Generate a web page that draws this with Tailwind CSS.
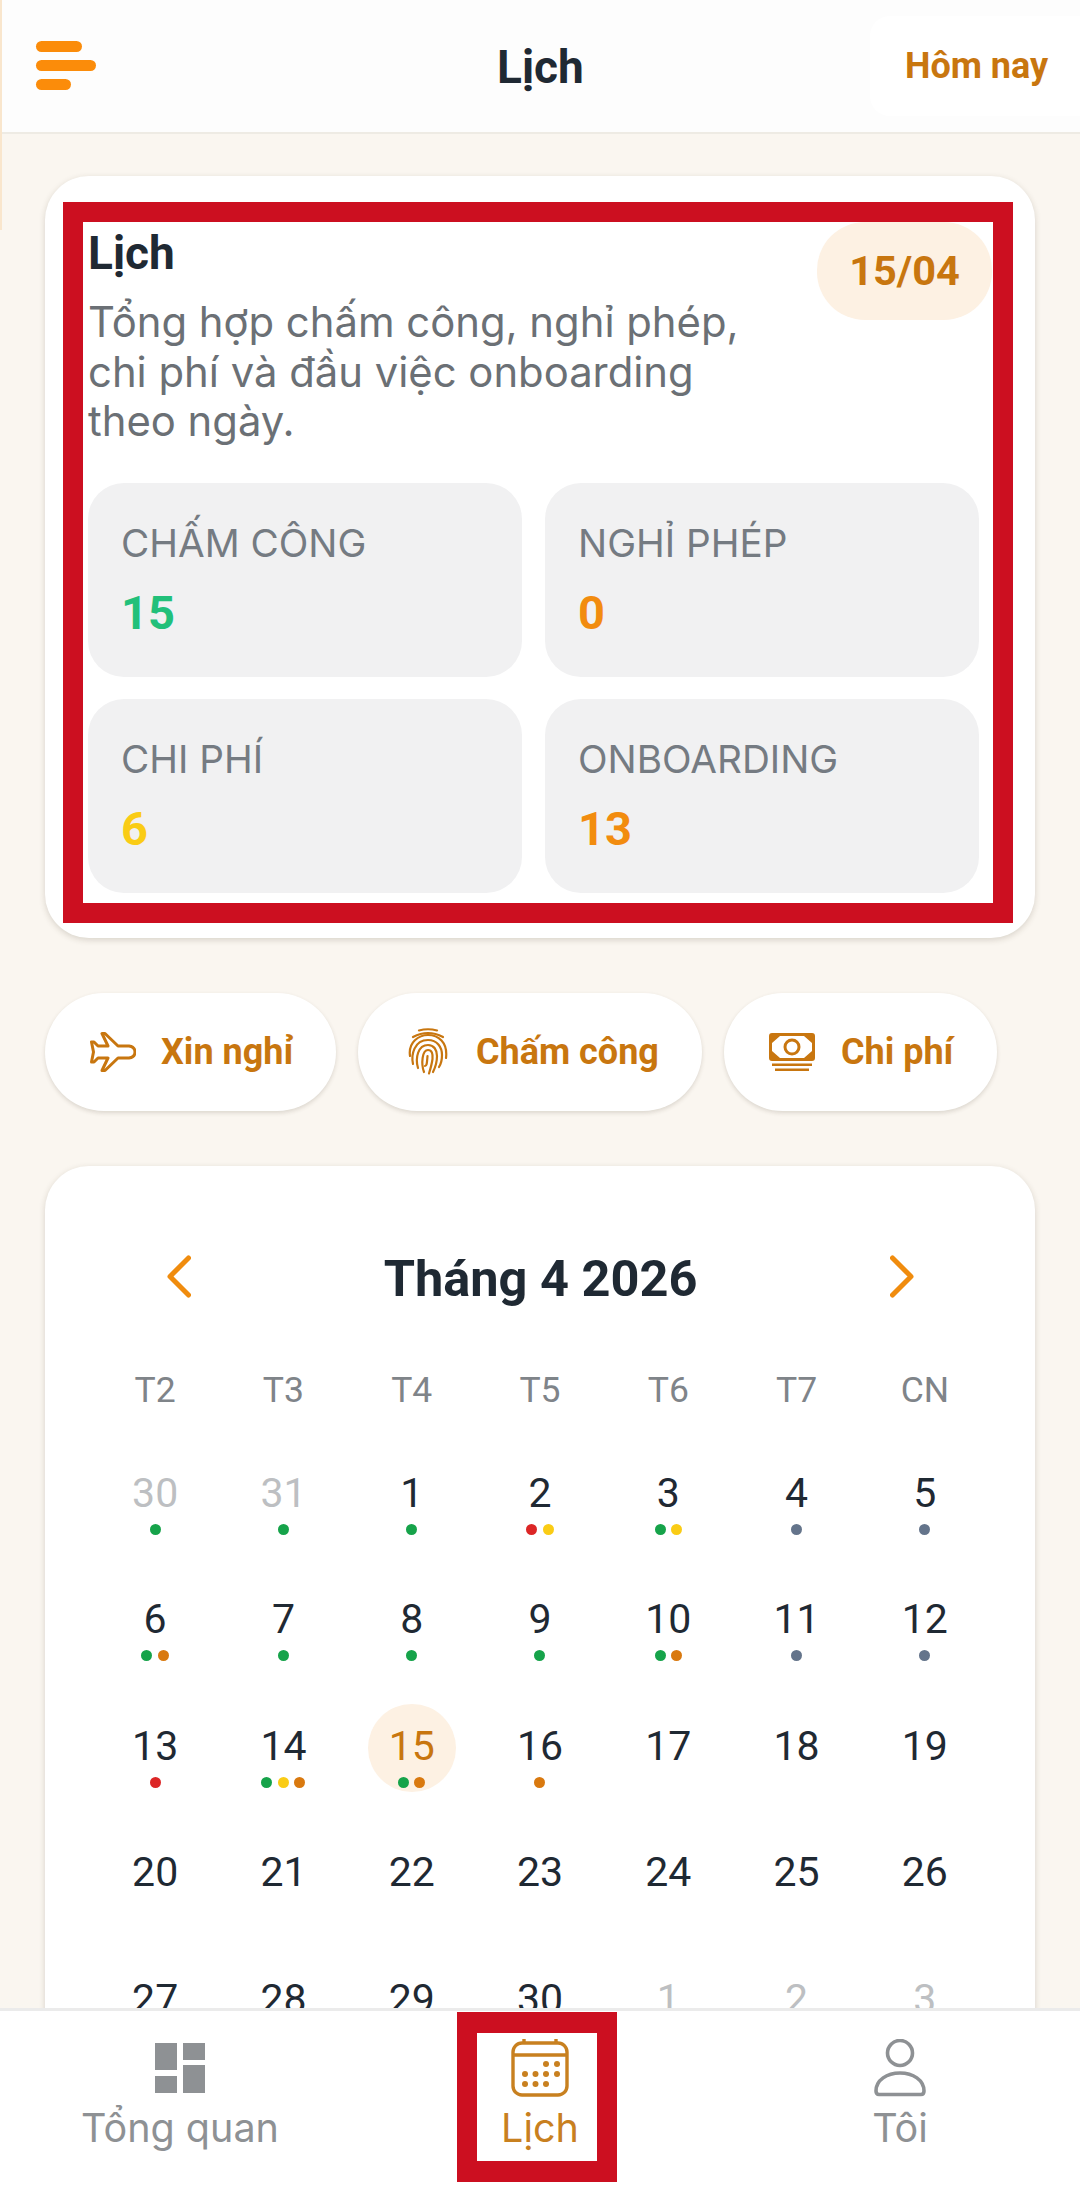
<!DOCTYPE html>
<html lang="vi">
  <head>
    <meta charset="UTF-8" />
    <meta name="viewport" content="width=device-width, initial-scale=1.0" />
    <title>Lịch</title>
    <script src="https://cdn.jsdelivr.net/npm/@tailwindcss/browser@4"></script>
  </head>
  <body class="bg-[#faf6f0] font-[Roboto,sans-serif]">
    <div class="relative flex flex-col w-[1080px] h-[2200px] overflow-hidden">
      <!-- thin strip on the left edge -->
      <div class="absolute z-10 left-0 top-0 w-[2px] h-[230px] bg-[#f9e6cd]"></div>

      <header class="flex items-center justify-between h-[134px] shrink-0 bg-[#fdfdfd] border-b-2 border-[#eeebe4] relative">
        <div class="flex flex-col gap-[8px] ml-[36px] -mt-[2px]">
          <div class="w-[46px] h-[11px] rounded-full bg-[#fb8c0a]"></div>
          <div class="w-[60px] h-[11px] rounded-full bg-[#fb8c0a]"></div>
          <div class="w-[35px] h-[11px] rounded-full bg-[#fb8c0a]"></div>
        </div>
        <h1 class="absolute left-[497px] top-[37px] text-[46px] leading-[60px] font-bold text-[#1f2933]">Lịch</h1>
        <button class="w-[210px] h-[100px] bg-white rounded-tl-[20px] rounded-bl-[20px] text-[36px] font-bold text-[#c8760f] text-left pl-[35px]">Hôm nay</button>
      </header>

      <main class="flex-1 min-h-0 overflow-hidden px-[45px] pt-[42px]">
        <!-- summary card -->
        <section class="bg-white rounded-[44px] shadow-[0_2px_6px_rgba(60,50,30,0.18)] pl-[18px] pr-[22px] pt-[26px] pb-[15px]">
          <div class="border-x-[20px] border-y-[20px] border-[#cc0f20]">
            <div class="flex justify-between pr-[1px]">
              <div class="pl-[5px]">
                <h2 class="text-[46px] leading-[60px] mt-[1px] font-bold text-[#1f2933]">Lịch</h2>
                <p class="w-[720px] text-[41.8px] leading-[49.5px] text-[#6b7075] mt-[15px] font-[Inter,sans-serif]">Tổng hợp chấm công, nghỉ phép,<br />chi phí và đầu việc onboarding<br />theo ngày.</p>
              </div>
              <div class="flex items-center justify-center w-[175px] h-[98px] rounded-[48px] bg-[#fdf1e3] text-[41.5px] font-bold text-[#c8760f]">15/04</div>
            </div>
            <div class="grid grid-cols-2 gap-x-[23px] gap-y-[22px] pl-[5px] pr-[14px] mt-[36px] pb-[10px]">
              <div class="h-[194px] rounded-[36px] bg-[#f1f1f2] pl-[33px] pt-[35px]">
                <div class="text-[38.7px] leading-[50px] text-[#757b82] font-[Inter,sans-serif]">CHẤM CÔNG</div>
                <div class="text-[47px] leading-[56px] font-bold text-[#22c07a] mt-[17px]">15</div>
              </div>
              <div class="h-[194px] rounded-[36px] bg-[#f1f1f2] pl-[33px] pt-[35px]">
                <div class="text-[38.7px] leading-[50px] text-[#757b82] font-[Inter,sans-serif]">NGHỈ PHÉP</div>
                <div class="text-[47px] leading-[56px] font-bold text-[#f28c0f] mt-[17px]">0</div>
              </div>
              <div class="h-[194px] rounded-[36px] bg-[#f1f1f2] pl-[33px] pt-[35px]">
                <div class="text-[38.7px] leading-[50px] text-[#757b82] font-[Inter,sans-serif]">CHI PHÍ</div>
                <div class="text-[47px] leading-[56px] font-bold text-[#facc15] mt-[17px]">6</div>
              </div>
              <div class="h-[194px] rounded-[36px] bg-[#f1f1f2] pl-[33px] pt-[35px]">
                <div class="text-[38.7px] leading-[50px] text-[#757b82] font-[Inter,sans-serif]">ONBOARDING</div>
                <div class="text-[47px] leading-[56px] font-bold text-[#f28c0f] mt-[17px]">13</div>
              </div>
            </div>
          </div>
        </section>

        <!-- quick actions -->
        <div class="flex gap-[22px] mt-[55px]">
          <button class="flex items-center w-[291px] h-[118px] pl-[45px] rounded-full bg-white shadow-[0_2px_4px_rgba(60,50,30,0.16)] text-[36px] font-bold text-[#c8760f]">
            <svg class="w-[46px] h-[40px] shrink-0 mr-[25px]" viewBox="0 0 46 40" fill="none" stroke="#c8760f" stroke-width="3" stroke-linejoin="round">
              <path d="M12 1.500H15L28 14H39Q45 15 45 20Q45 25 39 26H28L15 38.500H12L18 26H8L4 30H1.500L3.500 20L1.500 10H4L8 14H18Z" />
            </svg>
            Xin nghỉ
          </button>
          <button class="flex items-center w-[344px] h-[118px] pl-[50px] rounded-full bg-white shadow-[0_2px_4px_rgba(60,50,30,0.16)] text-[36px] font-bold text-[#c8760f]">
            <svg class="w-[40px] h-[47px] shrink-0 mr-[28px]" viewBox="0 0 40 47" fill="none" stroke="#c8760f" stroke-width="2.200" stroke-linecap="round">
              <path d="M11 2.500Q20 0 29 2.500" />
              <path d="M5 9Q20 1 35 9" />
              <path d="M2 28C0 14 11 7 20 7C30 7 40 14 38 30" />
              <path d="M5 36C3 27 6 12 20 12C29 12 34 19 34 27C34 32 33 36 31 39" />
              <path d="M10 40C7 30 10 17 20 17C26 17 29 22 29 28C29 34 28 38 25 44" />
              <path d="M16 44C13 36 14 22 20 22C24 22 25 26 24.500 31C24 35 23 39 21 45.500" />
              <path d="M19.500 28C19 34 19 38 17 38" />
            </svg>
            Chấm công
          </button>
          <button class="flex items-center w-[273px] h-[118px] pl-[45px] rounded-full bg-white shadow-[0_2px_4px_rgba(60,50,30,0.16)] text-[36px] font-bold text-[#c8760f]">
            <svg class="w-[46px] h-[38px] shrink-0 mr-[26px]" viewBox="0 0 46 38" fill="#c8760f" stroke="none">
              <rect x="1.500" y="1.500" width="43" height="25" rx="1.500" fill="none" stroke="#c8760f" stroke-width="3" />
              <circle cx="23" cy="14" r="7" fill="none" stroke="#c8760f" stroke-width="3" />
              <path d="M3 3H11L3 10Z M43 3H35L43 10Z M3 25H11L3 18Z M43 25H35L43 18Z" />
              <rect x="3" y="30.500" width="40" height="2.500" />
              <rect x="6" y="35.500" width="34" height="2.500" />
            </svg>
            Chi phí
          </button>
        </div>

        <!-- calendar -->
        <section class="bg-white rounded-[44px] shadow-[0_2px_6px_rgba(60,50,30,0.18)] px-[46px] mt-[55px] pt-[81px] h-[1000px]">
          <div class="flex items-center justify-between h-[60px] px-[76px]">
            <svg class="w-[24px] h-[43px]" viewBox="0 0 24 43" fill="none" stroke="#f08c0e" stroke-width="5" stroke-linecap="round" stroke-linejoin="round"><path d="M21.500 3L3 21.500L21.500 40" /></svg>
            <h3 class="text-[50.5px] font-bold text-[#1f2933] mt-[4px]">Tháng 4 2026</h3>
            <svg class="w-[24px] h-[43px] mr-[-1px]" viewBox="0 0 24 43" fill="none" stroke="#f08c0e" stroke-width="5" stroke-linecap="round" stroke-linejoin="round"><path d="M2.500 3L21 21.500L2.500 40" /></svg>
          </div>
          <div class="grid grid-cols-7 justify-items-center mt-[58px] text-[35.5px] leading-[50px] text-[#7f8489]">
            <div>T2</div><div>T3</div><div>T4</div><div>T5</div><div>T6</div><div>T7</div><div>CN</div>
          </div>
          <div id="days" class="grid grid-cols-7 justify-items-center gap-y-[38.5px] mt-[36px]"></div>
        </section>
      </main>

      <!-- bottom nav -->
      <nav class="relative grid grid-cols-3 h-[192px] shrink-0 bg-white border-t-[3px] border-[#ebebeb] pt-[28px]">
        <div class="flex flex-col items-center">
          <div class="flex items-center justify-center h-[58px]">
            <svg class="w-[50px] h-[50px]" viewBox="0 0 50 50" fill="#8e9194">
              <rect x="0" y="0" width="22" height="27" />
              <rect x="28" y="0" width="22" height="17" />
              <rect x="0" y="33" width="22" height="17" />
              <rect x="28" y="22" width="22" height="28" />
            </svg>
          </div>
          <span class="text-[39.5px] leading-[50px] mt-[6px] text-[#8e9194] font-[Inter,sans-serif]">Tổng quan</span>
        </div>
        <div class="flex flex-col items-center">
          <svg class="w-[58px] h-[58px]" viewBox="0 0 58 58" fill="none" stroke="#c8801f" stroke-width="3.400">
            <rect x="2" y="4" width="54" height="52" rx="9" />
            <path d="M2 16H56M13 0V4M45 0V4" />
            <g fill="#c8801f" stroke="none">
              <circle cx="35" cy="25" r="3" /><circle cx="46" cy="25" r="3" />
              <circle cx="14" cy="35" r="3" /><circle cx="24.500" cy="35" r="3" /><circle cx="35" cy="35" r="3" /><circle cx="46" cy="35" r="3" />
              <circle cx="14" cy="45" r="3" /><circle cx="24.500" cy="45" r="3" /><circle cx="35" cy="45" r="3" />
            </g>
          </svg>
          <span class="text-[39.5px] leading-[50px] mt-[6px] text-[#c8801f] font-[Inter,sans-serif]">Lịch</span>
        </div>
        <div class="flex flex-col items-center">
          <svg class="w-[54px] h-[58px]" viewBox="0 0 54 58" fill="none" stroke="#8e9194" stroke-width="3.600">
            <circle cx="27" cy="14" r="12.500" />
            <path d="M3 52C3 41 14 34 27 34C40 34 51 41 51 52Q51 55.500 48 55.500H6Q3 55.500 3 52Z" />
          </svg>
          <span class="text-[39.5px] leading-[50px] mt-[6px] text-[#8e9194] font-[Inter,sans-serif]">Tôi</span>
        </div>
        <!-- red annotation box over the active tab -->
        <div class="absolute left-[457px] top-[1px] w-[160px] h-[170px] border-x-[20px] border-y-[21px] border-[#cc0f20]"></div>
      </nav>
    </div>

    <script>
      const G = "bg-[#16a34a]", R = "bg-[#dc2626]", Y = "bg-[#facc15]", O = "bg-[#d9790f]", S = "bg-[#64748b]";
      const days = [
        ["30", [G], "muted"], ["31", [G], "muted"], ["1", [G]], ["2", [R, Y]], ["3", [G, Y]], ["4", [S]], ["5", [S]],
        ["6", [G, O]], ["7", [G]], ["8", [G]], ["9", [G]], ["10", [G, O]], ["11", [S]], ["12", [S]],
        ["13", [R]], ["14", [G, Y, O]], ["15", [G, O], "today"], ["16", [O]], ["17", []], ["18", []], ["19", []],
        ["20", []], ["21", []], ["22", []], ["23", []], ["24", []], ["25", []], ["26", []],
        ["27", []], ["28", []], ["29", []], ["30", []], ["1", [], "muted"], ["2", [], "muted"], ["3", [], "muted"],
      ];

      document.getElementById("days").innerHTML = days.map(([label, dots, kind]) => {
        const color = kind === "muted" ? "text-[#bdbfc2]" : kind === "today" ? "text-[#c8760f]" : "text-[#1f2933]";
        const bg = kind === "today" ? "bg-[#fdf1e3]" : "";
        const marks = dots.map((d) => `<span class="w-[11px] h-[11px] rounded-full ${d}"></span>`).join("");
        return `<div class="flex flex-col items-center w-[88px] h-[88px] rounded-full pt-[17px] ${bg}">
          <span class="text-[41px] leading-[50px] ${color}">${label}</span>
          <div class="flex gap-[5.5px] h-[11px] mt-[6px]">${marks}</div>
        </div>`;
      }).join("");
    </script>
  </body>
</html>
